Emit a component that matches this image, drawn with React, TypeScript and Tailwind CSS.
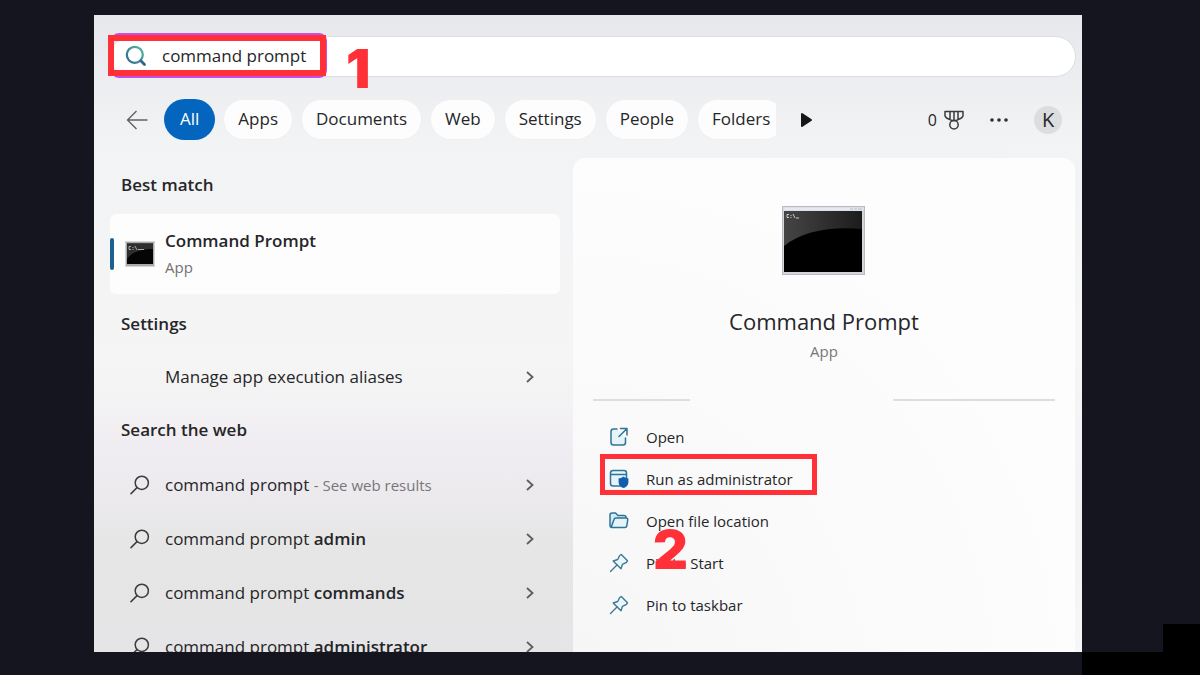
import { useState } from "react";

const tabs = ["All", "Apps", "Documents", "Web", "Settings", "People", "Folders"];

const suggestions = [
  { extra: "", note: "- See web results" },
  { extra: "admin", note: "" },
  { extra: "commands", note: "" },
  { extra: "administrator", note: "" },
];

const actions = [
  { label: "Open", icon: <OpenIcon /> },
  { label: "Run as administrator", icon: <AdminIcon />, marked: true },
  { label: "Open file location", icon: <FolderIcon /> },
  { label: "Pin to Start", icon: <PinIcon /> },
  { label: "Pin to taskbar", icon: <PinIcon /> },
];

function OpenIcon() {
  return (
    <svg width="20" height="20" viewBox="0 0 20 20" fill="none" stroke="#2f7397" strokeWidth="1.5" strokeLinecap="round" strokeLinejoin="round">
      <path d="M8 2H4.5A2.5 2.5 0 0 0 2 4.500V15.500A2.500 2.500 0 0 0 4.500 18H14a2.500 2.500 0 0 0 2.500-2.500V11" fill="#e6f4fa" />
      <path d="M11.500 1.500H18V8M17.800 1.700L10 9.500" />
    </svg>
  );
}

function AdminIcon() {
  return (
    <svg width="20" height="20" viewBox="0 0 20 20" fill="none">
      <rect x="1.500" y="1.500" width="16" height="15.500" rx="2.500" fill="#e6f4fa" stroke="#2f7397" strokeWidth="1.500" />
      <path d="M1.500 5.500h16" stroke="#2f7397" strokeWidth="1.500" />
      <path d="M14.500 7.500c1.400 1.200 2.800 1.700 4.900 1.800v3.900c0 2.800-1.900 4.800-4.900 5.900-2.900-1.100-4.900-3.100-4.900-5.900V9.300c2.100-.1 3.500-.6 4.900-1.800z" fill="#0f5fae" />
    </svg>
  );
}

function FolderIcon() {
  return (
    <svg width="20" height="20" viewBox="0 0 20 20" fill="none" stroke="#2f7397" strokeWidth="1.500" strokeLinejoin="round">
      <path d="M3 16.500A2 2 0 0 1 1 14.500V4A2 2 0 0 1 3 2H6.500l2.500 2.500H15A2 2 0 0 1 17 6.500V7" fill="#d3ebf6" />
      <path d="M7 7H17a1.600 1.600 0 0 1 1.700 2L17.800 14.800A2 2 0 0 1 15.800 16.500H3.500c-.7 0-1.100-.7-.9-1.400L5 8.500A2 2 0 0 1 7 7z" fill="#e6f4fa" />
    </svg>
  );
}

function PinIcon() {
  return (
    <svg width="20" height="20" viewBox="0 0 20 20" fill="none" stroke="#41788f" strokeWidth="1.400" strokeLinecap="round" strokeLinejoin="round">
      <path d="M12.300 1.500L18.500 7.700L17.500 9.300L13.500 11.300L12 15.800L4.200 8L8.700 6.500L10.700 2.500z" fill="#e9f6fb" />
      <path d="M8 12L1.500 18.500" />
    </svg>
  );
}

function Magnifier() {
  return (
    <svg className="shrink-0" width="20" height="20" viewBox="0 0 20 20" fill="none" stroke="#3c3c3e" strokeWidth="1.500" strokeLinecap="round">
      <circle cx="11.800" cy="7.800" r="6.600" />
      <path d="M7 12.600L1 18.600" />
    </svg>
  );
}

function Chevron() {
  return (
    <svg className="shrink-0" width="8" height="12" viewBox="0 0 8 12" fill="none" stroke="#5d5d5f" strokeWidth="1.800">
      <path d="M1 1l5.500 5L1 11" />
    </svg>
  );
}

function SearchIcon() {
  return (
    <svg className="shrink-0" width="22" height="22" viewBox="0 0 22 22" fill="none" strokeWidth="2.200" strokeLinecap="round">
      <defs>
        <linearGradient id="lens" x1="1" y1="0" x2="0" y2="1">
          <stop offset="0" stopColor="#58b89a" />
          <stop offset="1" stopColor="#2d6690" />
        </linearGradient>
      </defs>
      <circle cx="9.800" cy="9.800" r="8" stroke="url(#lens)" />
      <path d="M15.800 15.800l3.700 3.700" stroke="#2d6690" strokeWidth="2.800" />
    </svg>
  );
}

function SmallTerminal() {
  return (
    <svg className="shrink-0" width="30" height="26" viewBox="0 0 30 26">
      <rect x="0.500" y="0.500" width="29" height="25" fill="#a9abad" stroke="#d5d6d8" />
      <rect x="2" y="2.500" width="26" height="20.500" fill="#050505" />
      <path d="M2 2.500H28V8C16 8 7 11 2 18z" fill="#2e2e2e" />
      <path d="M6 5.500h-2v3h2M8 6v1M8 8v1M10 5l2 4M13 8.500h6" stroke="#a8a8a8" strokeWidth="1" fill="none" />
    </svg>
  );
}

function LargeTerminal() {
  return (
    <svg width="84" height="70" viewBox="0 0 84 70">
      <defs>
        <linearGradient id="shine" x1="0" y1="0" x2="1" y2="0">
          <stop offset="0" stopColor="#454545" />
          <stop offset="1" stopColor="#1c1c1c" />
        </linearGradient>
      </defs>
      <rect x="0.500" y="0.500" width="82" height="68" fill="#d3d5da" stroke="#b9bbc0" />
      <rect x="1.500" y="1.500" width="80" height="3" fill="#e6e9f0" />
      <path d="M68 3h3M72 3h3M76 3h4" stroke="#b4b9c4" />
      <rect x="2" y="5" width="78" height="61" fill="#000" />
      <path d="M2 5H80V23C50 20 20 25 2 40z" fill="url(#shine)" />
      <path d="M7 8.500h-2v3h2M9 9v1M9 11v1M11 8l2 4M14 12h3" stroke="#dcdcdc" strokeWidth="0.900" fill="none" />
    </svg>
  );
}

export default function App() {
  const [query, setQuery] = useState("command prompt");
  const [tab, setTab] = useState("All");

  return (
    <div className="relative h-screen overflow-hidden bg-[#15151f] pt-[15px] pr-[118px] pb-[23px] pl-[94px] font-['Open_Sans',sans-serif] text-[#262628]">
      <div className="absolute right-0 bottom-0 h-[23px] w-[118px] bg-black" />
      <div className="absolute right-0 bottom-0 h-[51px] w-[37px] bg-black" />

      <main className="flex h-full flex-col overflow-hidden bg-[radial-gradient(circle_at_bottom_right,#f7f7f8,#f7f7f800_45%),linear-gradient(#e7e8eb,#f2f3f5_20%,#f5f5f5_55%,#efecf1_70%,#e6e6e6_84%,#e5e4e6)] pr-[6px] pl-4">
        <div className="relative mt-[21px] flex h-[41px] shrink-0 items-center rounded-full border border-[#dcdde0] bg-white pb-[2px] pl-[14px]">
          <SearchIcon />
          <input
            aria-label="Search"
            className="ml-[15px] min-w-0 flex-1 bg-transparent text-[17px] leading-6 outline-none"
            value={query}
            onChange={(e) => setQuery(e.target.value)}
          />
          {/* step 1 */}
          <div className="pointer-events-none absolute -top-1 left-0 h-[45px] w-[216px] rounded-lg border-2 border-[#c44fe8]" />
          <div className="pointer-events-none absolute -top-[2px] -left-[3px] h-[41px] w-[218px] border-[6px] border-[#ff3038]" />
          <span className="pointer-events-none absolute top-3 left-[235px] font-['Inter',sans-serif] text-[54px] leading-10 font-black text-[#ff3038]">1</span>
        </div>

        <nav className="mt-[22px] flex h-[41px] shrink-0 items-center">
          <button aria-label="Back" className="mr-4 ml-4 shrink-0">
            <svg width="22" height="20" viewBox="0 0 22 20" fill="none" stroke="#626264" strokeWidth="1.400">
              <path d="M10.500 1L1.500 10L10.500 19M1.500 10H21.500" />
            </svg>
          </button>
          <div className="flex w-[612px] gap-2 overflow-hidden">
            {tabs.map((name) => (
              <button
                key={name}
                onClick={() => setTab(name)}
                className={
                  name === tab
                    ? "h-[41px] shrink-0 rounded-full bg-[#0465be] px-4 pb-px text-[17px] text-white"
                    : "h-[41px] shrink-0 rounded-full border border-[#f0f0f1] bg-[#fdfdfe] px-[14px] pb-px text-[17px]"
                }
              >
                {name}
              </button>
            ))}
          </div>
          <button aria-label="More tabs" className="ml-6 shrink-0">
            <svg width="13" height="16" viewBox="0 0 13 16" fill="#161618" stroke="#161618" strokeWidth="2" strokeLinejoin="round">
              <path d="M2 2v12l9-6z" />
            </svg>
          </button>
          <div className="mr-[14px] ml-auto flex items-center">
            <span className="text-base">0</span>
            <svg className="ml-[7px]" width="20" height="20" viewBox="0 0 20 20" fill="none" stroke="#3c3c3e" strokeWidth="1.500" strokeLinejoin="round">
              <path d="M1 1.500H19V6L17.500 8L12 10.500H8L2.500 8L1 6zM6 1.500V9.500M10 1.500V10.500M14 1.500V9.500" />
              <circle cx="10" cy="14.800" r="4.200" />
            </svg>
            <button aria-label="Options" className="ml-[26px]">
              <svg width="18" height="4" viewBox="0 0 18 4" fill="#2c2c2e">
                <circle cx="2" cy="2" r="1.800" />
                <circle cx="9" cy="2" r="1.800" />
                <circle cx="16" cy="2" r="1.800" />
              </svg>
            </button>
            <button className="ml-[26px] h-7 w-7 rounded-full bg-[#dcdddf] text-xl leading-7">K</button>
          </div>
        </nav>

        <div className="mt-[18px] grid min-h-0 flex-1 grid-cols-[450fr_502fr] gap-[13px] pr-px">
          <section className="min-w-0">
            <h2 className="mt-[15px] ml-[11px] text-[17px] leading-6 font-semibold">Best match</h2>
            <button className="mt-[17px] flex h-20 w-full items-center rounded-md bg-[#fdfdfe] text-left">
              <span className="h-8 w-1 rounded-full bg-[#1b6290]" />
              <span className="ml-[11px]">
                <SmallTerminal />
              </span>
              <span className="ml-[10px] flex flex-col pb-[2px]">
                <span className="text-[17px] leading-7 font-semibold">Command Prompt</span>
                <span className="text-[15px] leading-6 text-[#727274]">App</span>
              </span>
            </button>

            <h2 className="mt-[18px] ml-[11px] text-[17px] leading-6 font-semibold">Settings</h2>
            <button className="mt-[14px] flex h-[54px] w-full items-center pr-[26px] pl-[55px] text-left text-[17px]">
              <span className="flex-1">Manage app execution aliases</span>
              <Chevron />
            </button>

            <h2 className="mt-[14px] ml-[11px] text-[17px] leading-6 font-semibold">Search the web</h2>
            <div className="mt-4">
              {suggestions.map((s) => (
                <button key={s.extra} className="flex h-[54px] w-full items-center pr-[26px] pl-5 text-left text-[17px]">
                  <Magnifier />
                  <span className="ml-[15px] flex-1">
                    command prompt <b className="font-semibold">{s.extra}</b>
                    <span className="text-[15px] text-[#777779]">{s.note}</span>
                  </span>
                  <Chevron />
                </button>
              ))}
            </div>
          </section>

          <section className="flex min-w-0 flex-col rounded-t-xl bg-[radial-gradient(circle_at_bottom_left,#f6f6f7,#fdfdfe_70%)]">
            <div className="mt-12 flex flex-col items-center">
              <LargeTerminal />
              <h1 className="mt-[27px] text-[22px] leading-9">Command Prompt</h1>
              <p className="text-[15px] leading-6 text-[#777779]">App</p>
            </div>
            <div className="mx-5 mt-9 flex justify-between">
              <div className="h-[2px] w-[21%] bg-[#dededf]" />
              <div className="h-[2px] w-[35%] bg-[#dededf]" />
            </div>
            <div className="mt-[15px] flex flex-col items-start pl-9">
              {actions.map((a) => (
                <button key={a.label} className="relative flex h-[42px] items-center gap-[17px] text-[15px]">
                  {a.icon}
                  {a.label}
                  {a.marked && (
                    <>
                      {/* step 2 */}
                      <span className="pointer-events-none absolute -top-1 -left-[9px] h-[41px] w-[217px] border-[5px] border-[#ff3038]" />
                      <span className="pointer-events-none absolute top-[72px] left-11 z-10 font-['Inter',sans-serif] text-[54px] leading-10 font-black text-[#ff3038]">2</span>
                    </>
                  )}
                </button>
              ))}
            </div>
          </section>
        </div>
      </main>
    </div>
  );
}
